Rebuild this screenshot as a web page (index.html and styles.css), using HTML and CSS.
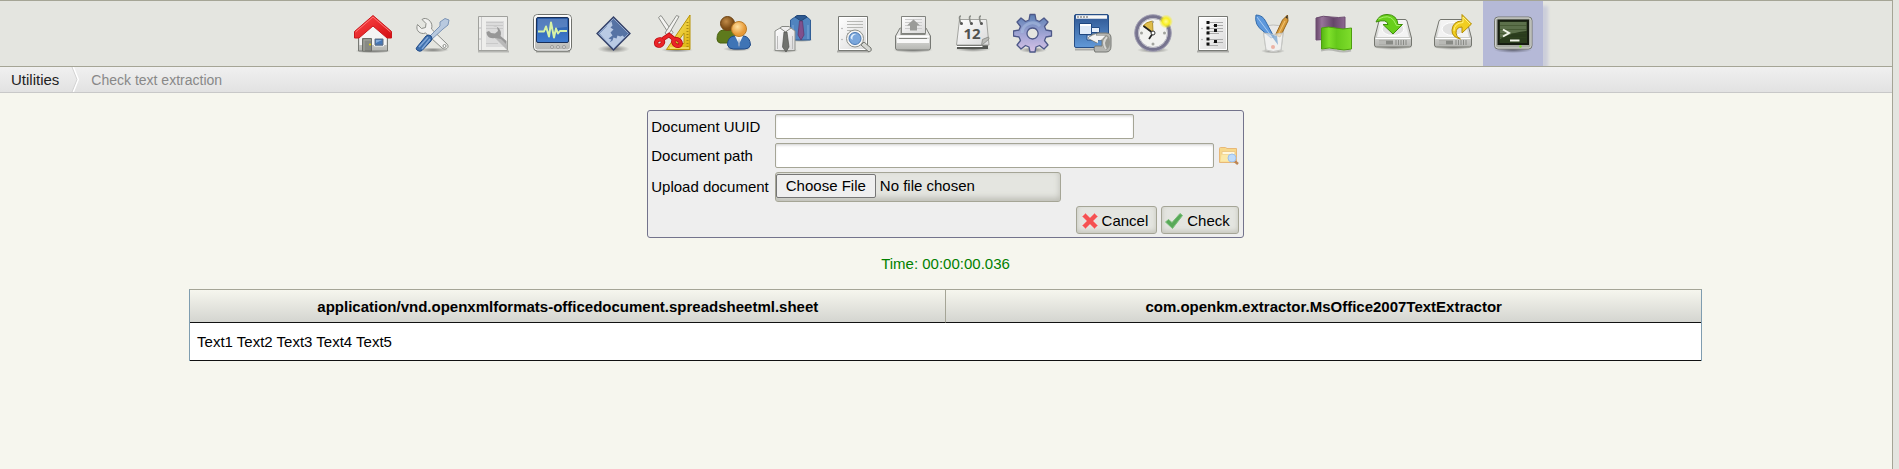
FILE: index.html
```html
<!DOCTYPE html>
<html lang="en">
<head>
<meta charset="utf-8">
<title>Check text extraction</title>
<link rel="stylesheet" href="styles.css">
</head>
<body>
<svg class="defs" aria-hidden="true">
  <defs>
    <linearGradient id="paper" x1="0" y1="0" x2="1" y2="1"><stop offset="0" stop-color="#fff"/><stop offset="1" stop-color="#d9d9d9"/></linearGradient>
    <linearGradient id="metal" x1="0" y1="0" x2="0" y2="1"><stop offset="0" stop-color="#f8f8f7"/><stop offset="1" stop-color="#b5b6b2"/></linearGradient>
    <linearGradient id="blue" x1="0" y1="0" x2="0" y2="1"><stop offset="0" stop-color="#2d5591"/><stop offset="1" stop-color="#6199d8"/></linearGradient>
    <linearGradient id="screen" x1="0" y1="0" x2="0" y2="1"><stop offset="0" stop-color="#2b5ba4"/><stop offset="1" stop-color="#3f7cd0"/></linearGradient>
    <linearGradient id="red" x1="0" y1="0" x2="1" y2="1"><stop offset="0" stop-color="#ff4a4a"/><stop offset="1" stop-color="#d40d12"/></linearGradient>
    <linearGradient id="yellow" x1="0" y1="0" x2="1" y2="1"><stop offset="0" stop-color="#fff27a"/><stop offset="1" stop-color="#dcae08"/></linearGradient>
    <linearGradient id="green" x1="0" y1="0" x2="1" y2="0"><stop offset="0" stop-color="#56b512"/><stop offset=".25" stop-color="#7fe02b"/><stop offset=".5" stop-color="#65c91b"/><stop offset="1" stop-color="#7fdd2c"/></linearGradient>
    <linearGradient id="purple" x1="0" y1="0" x2="1" y2="0"><stop offset="0" stop-color="#69486b"/><stop offset=".2" stop-color="#97749a"/><stop offset=".6" stop-color="#65466a"/><stop offset="1" stop-color="#8d6791"/></linearGradient>
    <linearGradient id="gear" x1="0" y1="0" x2="0" y2="1"><stop offset="0" stop-color="#5b7fb4"/><stop offset=".6" stop-color="#a9a9d8"/><stop offset="1" stop-color="#d7c3e6"/></linearGradient>
    <radialGradient id="shade"><stop offset="0" stop-color="#000" stop-opacity=".45"/><stop offset="1" stop-color="#000" stop-opacity="0"/></radialGradient>
    <radialGradient id="glow"><stop offset="0" stop-color="#fffb90"/><stop offset=".5" stop-color="#f8ee20"/><stop offset="1" stop-color="#f8ee20" stop-opacity="0"/></radialGradient>
    <radialGradient id="skin" cx=".4" cy=".35"><stop offset="0" stop-color="#ffe0a0"/><stop offset="1" stop-color="#e79a38"/></radialGradient>
    <radialGradient id="brown" cx=".4" cy=".35"><stop offset="0" stop-color="#c08a48"/><stop offset="1" stop-color="#7e4d16"/></radialGradient>
    <g id="drive">
      <ellipse cx="20" cy="34" rx="20" ry="3" fill="url(#shade)"/>
      <path d="M8 6.500h24q1.500 0 2 1.500l4.500 17v7q0 2-2 2h-33q-2 0-2-2v-7l4.500-17q.5-1.500 2-1.500z" fill="url(#metal)" stroke="#74766f"/>
      <path d="M8.500 8h23l4.500 16h-32z" fill="#f3f3f3"/>
      <ellipse cx="20" cy="16" rx="11" ry="6.500" fill="#e2e2e2" stroke="#fff"/>
      <path d="M2.500 25.500h35" stroke="#fff"/>
      <path d="M6 29.500h14" stroke="#888a85" stroke-width="4"/><path d="M6 29.500h7" stroke="#b8b9b5" stroke-width="4"/>
      <path d="M23 27v5M25.500 27v5M28 27v5M30.500 27v5M33 27v5" stroke="#888a85"/>
    </g>
    <g id="sheet">
      <path d="M4 38.500h32" stroke="#000" stroke-opacity=".25" stroke-width="2"/>
      <path d="M5.500 3.500h29v34h-29z" fill="url(#paper)" stroke="#777974" stroke-linejoin="round"/>
      <path d="M6.500 4.500h27v32h-27z" fill="none" stroke="#fff"/>
    </g>
  </defs>
</svg>
<div class="page">
  <nav class="toolbar" aria-label="Administration">
    <a class="tool" href="#home" aria-label="Home"><svg viewBox="0 0 40 40">
      <ellipse cx="20" cy="38" rx="18" ry="2.500" fill="url(#shade)"/>
      <path d="M5.500 20L20 8l14.500 12v18h-29z" fill="url(#metal)" stroke="#777974"/><path d="M6.500 20L20 9l13.500 11v12h-27z" fill="#f4f4f4"/>
      <path d="M9.500 25.500h9V38h-9z" fill="#888a85" stroke="#6d6f69"/><path d="M11 38V27h7" fill="none" stroke="#a5a79f"/><circle cx="17" cy="31.500" r="1" fill="#edd400"/>
      <path d="M21.500 25.500h9v7.500h-9z" fill="#3467a5" stroke="#f8f8f8"/><path d="M22 26h8v6h-8z" fill="#4576b5" stroke="#5e6d80"/><path d="M23 27h6l-6 3z" fill="#88addb"/>
      <path d="M20 2.500L38.500 18.500v6.500L34 25 20 13 6 25H1.500v-6.500z" fill="url(#red)" stroke="#c9171b" stroke-linejoin="round"/><path d="M2.500 19L20 4 37.500 19" fill="none" stroke="#ff7777"/>
    </svg></a>
    <a class="tool" href="#tools" aria-label="Tools"><svg viewBox="0 0 40 40">
      <ellipse cx="20" cy="37" rx="16" ry="2.500" fill="url(#shade)"/>
      <path d="M11 5.500l-2 1 4 4-.5 4-4 1-4-4c-2 5 1 9 6 9l2-.5L29 35c4 3 8-1 5-4L18.500 16c2-6-3-11-7.500-10.500z" fill="#f1f1ef" stroke="#8b8d88"/>
      <circle cx="31.500" cy="33" r="1.500" fill="#fff" stroke="#8b8d88"/>
      <path d="M27 9l5-3.500 4 1.500-1 5-5 4-12 11-2.500-2.500L27 13z" fill="#b8c9df" stroke="#7a93b5"/>
      <path d="M4 34l9-11q3-2 5 0t0 5L9 37.500q-2 1.500-4.500 0T4 34z" fill="#3e70ae" stroke="#204a87"/><path d="M6 34l9-10M9 36l8-10" stroke="#83a8d8" stroke-width="1.500"/>
    </svg></a>
    <a class="tool" href="#scripts" aria-label="Scripts"><svg viewBox="0 0 40 40">
      <path d="M5 38.500h31" stroke="#000" stroke-opacity=".2" stroke-width="2"/><path d="M5.500 3.500h29v34h-29z" fill="#eeeeec" stroke="#a0a19d"/><path d="M8.500 4v33" stroke="#ccc"/>
      <path d="M13 8h18v26H13z" fill="#dcdcdc"/><path d="M13 9.500h17M13 12.500h17M13 15.500h17M13 30.500h12" stroke="#c9c9c9"/>
      <path d="M20 13l4 1 1 4-3 2.500-4-.5-2-2-2.500 1c0 4 3 7 8 6l3 1 9 8v-6l-6-5c2-5-2-10-7.500-10z" fill="#979797"/><path d="M22 25l6 1 6 6v5z" fill="#b9b9b9"/>
      <circle cx="7" cy="15" r=".7" fill="#aaa"/><circle cx="7" cy="26" r=".7" fill="#aaa"/>
    </svg></a>
    <a class="tool" href="#statistics" aria-label="Statistics"><svg viewBox="0 0 40 40">
      <path d="M3 38.500h34" stroke="#000" stroke-opacity=".3" stroke-width="2"/>
      <rect x=".5" y="1.500" width="38" height="36.500" rx="4" fill="url(#metal)" stroke="#70726d"/><rect x="1.500" y="2.500" width="36" height="34.500" rx="3" fill="none" stroke="#fff"/>
      <rect x="3.500" y="4.500" width="32" height="25" rx="1.500" fill="url(#screen)" stroke="#182f59"/><path d="M5 6h29v8Q18 15 5 19z" fill="#6f93c9" opacity=".6"/>
      <path d="M5 18.500h6l2-5 3 10 2-14 3 15 2-9 2 5 2-2.500h7" fill="none" stroke="#d6f2a6" stroke-width="2" stroke-linejoin="round"/>
      <circle cx="19" cy="34" r="1.500" fill="#ddd" stroke="#999"/><circle cx="25" cy="34" r="1.500" fill="#ddd" stroke="#999"/><circle cx="31" cy="34" r="1.500" fill="#ddd" stroke="#999"/>
    </svg></a>
    <a class="tool" href="#mime" aria-label="Mime types"><svg viewBox="0 0 40 40">
      <ellipse cx="20.500" cy="36" rx="16" ry="4" fill="url(#shade)"/><path d="M20.500 4L37 20.500 20.500 37 4 20.500z" fill="#5673a4"/>
      <path d="M6.500 20.500l7-7 1-2 4-3 1 4-2 2 3 2-3 3 2 3-4 3 3 1-2 3 3-2 1-3 3 1 1-3 3 1 2-1 2 2-11 11.500z" fill="#b9cae4"/><path d="M20.500 5.500L35.500 20.500 20.500 35.500 5.500 20.500z" fill="none" stroke="#9bb2d6"/><path d="M20.500 4L37 20.500 20.500 37 4 20.500z" fill="none" stroke="#354269" stroke-width="1.300"/>
    </svg></a>
    <a class="tool" href="#stamps" aria-label="Stamps"><svg viewBox="0 0 40 40">
      <ellipse cx="24" cy="37" rx="16" ry="2.500" fill="url(#shade)"/>
      <path d="M37 2v34.500H13.500zM31 20v10.500h-7.500z" fill="url(#yellow)" fill-rule="evenodd" stroke="#b89305"/><path d="M34.500 9v25" stroke="#a98a10" stroke-width="2" stroke-dasharray="1 2"/><path d="M17 35h19" stroke="#fff39a"/>
      <path d="M5.500 4.500L8 2.500l12 17-3 3z" fill="#f3f3f1" stroke="#8d8f8a"/><path d="M26 3.500l-2.500-1L12 20l3 2.500z" fill="#f3f3f1" stroke="#8d8f8a"/>
      <g fill="none" stroke="#b50b10" stroke-width="4.400"><ellipse cx="6.500" cy="29.500" rx="3.600" ry="3" transform="rotate(-30 6.500 29.500)"/><ellipse cx="24" cy="29.500" rx="4" ry="3" transform="rotate(35 24 29.500)"/><path d="M10 26l6-4 5 4"/></g>
      <g fill="none" stroke="#eb2428" stroke-width="3"><ellipse cx="6.500" cy="29.500" rx="3.600" ry="3" transform="rotate(-30 6.500 29.500)"/><ellipse cx="24" cy="29.500" rx="4" ry="3" transform="rotate(35 24 29.500)"/><path d="M10 26l6-4 5 4"/></g>
    </svg></a>
    <a class="tool" href="#users" aria-label="Users"><svg viewBox="0 0 40 40">
      <ellipse cx="24" cy="36" rx="14" ry="2.500" fill="url(#shade)"/>
      <path d="M4 26q0-8 6-9h9q4 2 4 6v7H7q-3-1-3-4z" fill="#5e7a1c" stroke="#46600c"/><circle cx="14.500" cy="10.500" r="7" fill="url(#brown)" stroke="#6e4313"/>
      <path d="M14.500 32q0-8 6.500-9h10q6 1 6.500 9-1 4-6 4h-11q-5 0-6-4z" fill="#3f74b5" stroke="#204a87"/><path d="M22 23h8l-4 8z" fill="#f4f4f4"/><path d="M26 25l1 7-1 2-1-2z" fill="#8ea4c4"/><circle cx="26" cy="16" r="7.500" fill="url(#skin)" stroke="#bb7b27"/>
    </svg></a>
    <a class="tool" href="#profiles" aria-label="Profiles"><svg viewBox="0 0 40 40">
      <ellipse cx="12" cy="37.500" rx="13" ry="2.500" fill="url(#shade)"/><ellipse cx="28" cy="27" rx="12" ry="2" fill="url(#shade)"/>
      <path d="M22 4q6-3 12 0l3.500 3v20h-20V7z" fill="#5084bf" stroke="#315e96"/><path d="M22 4l6 4 6-4-2-1.500h-8z" fill="#2d5991" stroke="#224879"/><path d="M20 12v14M35 12v14" stroke="#7ba8da"/><path d="M26.500 8h3l1.500 14-3 5-3-5z" fill="#80508c" stroke="#5d3569" stroke-width=".7"/>
      <path d="M7 15q6-3 11 0l4 3v19.500H2V18z" fill="url(#paper)" stroke="#8e908b"/><path d="M7 15l5.500 4 5.500-4-2-1.500H9z" fill="#eee" stroke="#878984"/><path d="M4.500 23v13M19.500 23v13" stroke="#bbb"/><path d="M11 19h3l2 15-3 5-3.500-5z" fill="#70726e" stroke="#50524d" stroke-width=".7"/>
    </svg></a>
    <a class="tool" href="#logs" aria-label="Logs"><svg viewBox="0 0 40 40">
      <use href="#sheet"/><path d="M14 8.500h16M14 11.500h16M14 14.500h16M14 17.500h7M14 20.500h4" stroke="#b7b8b5"/><circle cx="9" cy="15.500" r=".8" fill="#aaa"/><circle cx="9" cy="26.500" r=".8" fill="#aaa"/>
      <path d="M28 32l3-3 7 6q1.500 3-2 4z" fill="#d5d6d2" stroke="#757771"/><circle cx="22" cy="25.500" r="8.500" fill="#f4f4f4" stroke="#8d8f89"/><circle cx="22" cy="25.500" r="6" fill="#7ba7dc" stroke="#4b7ab4"/><path d="M17.500 25q1-5 6-4-5 1-4 6z" fill="#e2effc"/>
    </svg></a>
    <a class="tool" href="#reports" aria-label="Reports"><svg viewBox="0 0 40 40">
      <ellipse cx="20" cy="37" rx="20" ry="3" fill="url(#shade)"/>
      <path d="M6 17q0-2 2-2h24q2 0 2 2l3.500 6v12q0 2-2 2h-31q-2 0-2-2V23z" fill="url(#metal)" stroke="#777974"/><path d="M7.500 22h25v-6h-25z" fill="#888a85"/>
      <path d="M8.500 3.500h24v17h-24z" fill="url(#paper)" stroke="#81837e"/><path d="M12 6.500h17M12 9.500h17M12 12.500h17M12 15.500h17" stroke="#ccc"/><path d="M20.500 6.500l6.500 6h-3v5h-7v-5h-3z" fill="#9a9b98"/>
      <path d="M4 23.500h32" stroke="#fff" stroke-width="2"/><path d="M6 25.500h28" stroke="#81837e"/><path d="M4 28h32" stroke="#f8f8f8" stroke-width="4"/>
    </svg></a>
    <a class="tool" href="#cron" aria-label="Crontab"><svg viewBox="0 0 40 40">
      <ellipse cx="20" cy="36" rx="18" ry="3" fill="url(#shade)"/><path d="M4 32h31v4H4z" fill="#555753"/><path d="M6.500 6.500h27L36 32H3.500z" fill="url(#paper)" stroke="#a3a4a0"/><path d="M3.500 33.500h26" stroke="#fff"/>
      <path d="M28.500 32.500l1-6 6-2.500.5 2z" fill="#babbb7" stroke="#92938f"/>
      <g fill="none" stroke="#8a8c87" stroke-width="1.600"><path d="M8 11q-3-8 0-8M18 11q-3-8 0-8M28 11q-3-8 0-8"/></g><g fill="#555"><circle cx="8.500" cy="10.500" r="1.500"/><circle cx="18.500" cy="10.500" r="1.500"/><circle cx="28.500" cy="10.500" r="1.500"/></g>
      <text x="19" y="26" class="calendar-day">12</text>
    </svg></a>
    <a class="tool" href="#config" aria-label="Configuration"><svg viewBox="0 0 40 40">
      <ellipse cx="20" cy="37" rx="14" ry="3" fill="url(#shade)"/>
      <path fill-rule="evenodd" d="M17 1.500h5l1 5.500 3.500 1.500L31 5l4 4-3.500 4.500L33 17l5.500 1v5L33 24l-1.500 3.500L35 32l-4 4-4.500-3.500L23 34l-1 5h-5l-1-5-3.500-1.500L8 36l-4-4 3.500-4.500L6 24l-5.500-1v-5L6 17l1.500-3.500L4 9l4-4 4.500 3.500L16 7zM19.500 15a5.500 5.500 0 1 0 .1 0z" fill="url(#gear)" stroke="#4d5888" stroke-width="1.300" stroke-linejoin="round"/>
      <path d="M9 20a10.500 10.500 0 0 1 18-7" fill="none" stroke="#a9bddf" stroke-width="3" opacity=".6"/>
    </svg></a>
    <a class="tool" href="#automation" aria-label="Automation"><svg viewBox="0 0 40 40">
      <path d="M2 36.500h34" stroke="#000" stroke-opacity=".25" stroke-width="2"/><rect x="1.500" y="1.500" width="34" height="33" rx="1.500" fill="url(#blue)" stroke="#274f87"/><path d="M3 4h31" stroke="#f7f7f7" stroke-width="3.500"/><path d="M4 4h11" stroke="#aaa" stroke-width="2" stroke-dasharray="2 1"/>
      <path d="M6.500 10.500h12v11h-12z" fill="#dfeaf8" stroke="#1e467f"/><path d="M7 12h11" stroke="#fff" stroke-width="2"/><path d="M18.500 14.500h8v5h-8zM14 22h12v5H14z" fill="#e9f1fb" stroke="#244d87"/>
      <path d="M15 25l5-4h4v-1h9q5 0 5 5v8q0 6-5 6H22q-2-3 0-6h7v-6h-5v3z" fill="#b4b5b1" stroke="#777974"/><path d="M33 22q4 1 4 7t-4 8q-4-3-4-8t4-7z" fill="#94958f"/><path d="M34 24q-3 3-3 6t2 6" fill="none" stroke="#d8d8d5" stroke-width="2"/><path d="M15 25l8-4v2h9l-4 4h-3v3z" fill="#f3f3f2"/>
    </svg></a>
    <a class="tool" href="#tasks" aria-label="Scheduled tasks"><svg viewBox="0 0 40 40">
      <ellipse cx="20" cy="37" rx="16" ry="3" fill="url(#shade)"/><circle cx="20" cy="20" r="16.500" fill="#f2f2f0" stroke="#77748f" stroke-width="3.600"/><circle cx="20" cy="20" r="18.300" fill="none" stroke="#a4a2b5"/><circle cx="20" cy="20" r="14.500" fill="none" stroke="#b7b6c2"/>
      <path d="M20 20L10 13q3-4 9.500-5z" fill="#e0bd4b" stroke="#b39229"/><path d="M20 20L10.500 13M20 20l-4 6" stroke="#222" stroke-width="1.700"/><circle cx="20" cy="20" r="2" fill="#fff" stroke="#333"/><g fill="#a2a39e"><circle cx="8.500" cy="20" r="1.500"/><circle cx="31.500" cy="20" r="1.500"/><circle cx="20" cy="31" r="1.500"/><circle cx="20" cy="9" r="1"/></g>
      <circle cx="33" cy="8.500" r="7" fill="url(#glow)"/>
    </svg></a>
    <a class="tool" href="#activity" aria-label="Activity log"><svg viewBox="0 0 40 40">
      <use href="#sheet"/><path d="M14 9.500h16M20 12.500h10M14 15.500h16M14 18.500h16M14 20.500h12M14 26.500h16M20 29.500h10M14 32.500h11" stroke="#aaa"/>
      <g fill="#111"><path d="M13.500 8h3v3h-3zM21 11h3v3h-3zM13.500 13.500h3v3h-3zM21 16h3v3h-3zM13.500 18.500h3v3h-3zM13.500 24.500h3v3h-3zM21 27h3v3h-3zM13.500 29.500h3v3h-3z"/></g><circle cx="9" cy="15.500" r=".8" fill="#aaa"/><circle cx="9" cy="26.500" r=".8" fill="#aaa"/>
    </svg></a>
    <a class="tool" href="#appearance" aria-label="Appearance"><svg viewBox="0 0 40 40">
      <ellipse cx="20" cy="38" rx="12" ry="2.500" fill="url(#shade)"/><path d="M10 14q10-4 21 0l-3 23q-8 3-15 0z" fill="#e8e8e7" stroke="#bdbeba"/>
      <path d="M3 2q7 0 10 7l8 15-3 1-8-7Q1 12 3 2z" fill="#5d98dc" stroke="#346cab"/><path d="M4 4l15 20" stroke="#a8cbf2"/>
      <path d="M34.500 2l.5 6-8 16-4.500-2 7-15z" fill="#d79a3b" stroke="#95651a"/><path d="M34.500 2v4l-2-1.500z" fill="#333"/><path d="M32 8l-7 14" stroke="#f0c777"/>
      <path d="M10.500 20q10 3 19.500 0l-2 17q-8 3-15 0z" fill="#f3f3f2" fill-opacity=".72" stroke="#c6c7c4"/><path d="M17 21l8 11-1-9z" fill="#6c9dcd" opacity=".7"/><circle cx="20" cy="34" r="2" fill="#e8735a" opacity=".5"/>
    </svg></a>
    <a class="tool" href="#language" aria-label="Language"><svg viewBox="0 0 40 40">
      <path d="M3 5q7-3 15-1 8 1 14 0v22q-8 2-15 1-7-1-14 0z" fill="url(#purple)" stroke="#6c4c70"/><path d="M8 37.500q8-2 15 0t15 0" fill="none" stroke="#000" stroke-opacity=".2" stroke-width="2"/><path d="M8.500 15q7-2 14 0t16 0v21q-8 2-15 0t-15 0z" fill="url(#green)" stroke="#4d9e0f"/>
    </svg></a>
    <a class="tool" href="#import" aria-label="Import"><svg viewBox="0 0 40 40">
      <use href="#drive"/><path d="M3 9Q6 1.500 14 1.500q10 0 11 10h4.500L20 21 10 11.500h5q-1-6-12-2.500z" fill="#67cf1b" stroke="#3f8d0b" stroke-linejoin="round"/><path d="M5.500 6q10-5 15 1l3 5.500h3.500" fill="none" stroke="#a6f06a"/>
    </svg></a>
    <a class="tool" href="#export" aria-label="Export"><svg viewBox="0 0 40 40">
      <use href="#drive"/><path d="M27.500 26q-9-2-8.500-9 1-9 10-9V1.500L38.500 11 29 20v-6q-6 0-6 6 0 4 4.500 6z" fill="#f1ce20" stroke="#b48d04" stroke-linejoin="round"/><path d="M21 18q0-8 9-8.500V4l7 7" fill="none" stroke="#fff17d"/>
    </svg></a>
    <a class="tool active" href="#utilities" aria-label="Utilities" aria-current="page"><svg viewBox="0 0 40 40">
      <ellipse cx="20" cy="37" rx="19" ry="3" fill="url(#shade)"/><rect x="1.500" y="4" width="37.500" height="32" rx="3.500" fill="#a7aaa3" stroke="#747770"/><rect x="2.500" y="5" width="35.500" height="30" rx="2.500" fill="none" stroke="#d0d2ce"/>
      <path d="M5.500 7.500h29.500v23.500H5.500z" fill="#2a3c1d" stroke="#171d12" stroke-width="2"/><path d="M7 9h26.500v9Q20 19 7 26z" fill="#5c704b"/><path d="M7 12.500h26.500M7 16.500h26.500M7 20.500h26.500M7 24.500h26.500" stroke="#31461f" stroke-opacity=".5"/>
      <path d="M10 16.500l6 3.500-6 3.500" fill="none" stroke="#f1f5e9" stroke-width="2"/><path d="M17 27.500h9.500" stroke="#f1f5e9" stroke-width="2"/><circle cx="27.500" cy="33.500" r="1.200" fill="#7cdd29"/>
    </svg></a>
  </nav>

  <nav class="breadcrumb" aria-label="Breadcrumb">
    <a class="crumb" href="#utilities">Utilities</a>
    <svg class="crumb-arrow" viewBox="0 0 10 25" aria-hidden="true"><path d="M2 0l5 12.500L2 25" fill="none" stroke="#fff" stroke-width="2"/><path d="M1 0l5 12.500L1 25" fill="none" stroke="#d2d2d2"/></svg>
    <span class="crumb-current" aria-current="page">Check text extraction</span>
  </nav>

  <main class="content">
    <form class="form">
      <label for="uuid">Document UUID</label>
      <div class="field"><input class="text uuid" id="uuid" type="text"></div>
      <label for="path">Document path</label>
      <div class="field"><input class="text path" id="path" type="text">
        <a class="browse" href="#browse" aria-label="Browse documents"><svg viewBox="0 0 20 18"><path d="M.5 15.500V1.500q0-1 1-1h5l1.500 1h9.500v14z" fill="#f7d88a" stroke="#e8b878"/><path d="M3 4.500h13v3H3z" fill="#fff8df" stroke="#edca88"/><path d="M1.500 14.500l1-7h14v7z" fill="#fbe9a9"/><path d="M15.500 14l3.500 3" stroke="#bd8554" stroke-width="2.500"/><circle cx="13" cy="11" r="4" fill="#bfdcfb" stroke="#9dc0ec"/></svg></a>
      </div>
      <label for="file">Upload document</label>
      <div class="field"><input class="file" id="file" type="file"></div>
      <div class="actions">
        <button class="button" type="reset"><svg viewBox="0 0 16 16" aria-hidden="true"><path d="M3.500.5L8 5l4.500-4.500 3 3L11 8l4.500 4.500-3 3L8 11l-4.500 4.500-3-3L5 8 .5 3.500z" fill="#f45252" stroke="#fa8a8a"/></svg>Cancel</button>
        <button class="button check" type="button"><svg viewBox="0 0 18 16" aria-hidden="true"><path d="M.5 9L3.500 6.500 7 9.500 15 .5l2.500 2L7.500 15.500z" fill="#58a958" stroke="#7cbf7a"/></svg>Check</button>
      </div>
    </form>

    <p class="time">Time: 00:00:00.036</p>

    <table class="results">
      <thead><tr><th scope="col">application/vnd.openxmlformats-officedocument.spreadsheetml.sheet</th><th scope="col">com.openkm.extractor.MsOffice2007TextExtractor</th></tr></thead>
      <tbody><tr><td colspan="2">Text1 Text2 Text3 Text4 Text5</td></tr></tbody>
    </table>
  </main>
</div>
</body>
</html>
```
FILE: styles.css
```css
* {
  box-sizing: border-box;
}

body {
  margin: 0;
  padding-right: 6px;
  background: #e4e5e0;
  color: #000;
  font: 15px/20px "Liberation Sans", Arial, sans-serif;
}

.defs {
  position: absolute;
  width: 0;
  height: 0;
}

.page {
  min-height: 100vh;
  border-top: 1px solid #a5a596;
  border-right: 1px solid #a5a596;
  background: #f6f6ee;
}

.toolbar {
  display: flex;
  justify-content: center;
  padding-right: 6px;
  overflow: hidden;
  border-bottom: 1px solid #a5a596;
  background: #e4e5e0;
}

.tool {
  padding: 12px 10px 13px;
}

.tool svg {
  display: block;
  width: 40px;
  height: 40px;
}

.tool.active {
  background: #b5b9d7;
  box-shadow: 5px 5px 3px #ccceda;
}

.calendar-day {
  font: bold 15px "Open Sans", "Liberation Sans", sans-serif;
  fill: #50524e;
  text-anchor: middle;
}

.breadcrumb {
  display: flex;
  align-items: center;
  height: 26px;
  padding-left: 11px;
  border-bottom: 1px solid #c8c8c8;
  background: linear-gradient(#f0f0f0, #e2e2e2);
}

.crumb {
  color: #222;
  text-decoration: none;
}

.crumb-arrow {
  width: 10px;
  height: 25px;
  margin: 0 10px 0 12px;
}

.crumb-current {
  color: #888;
  font-size: 14px;
}

.content {
  display: flex;
  flex-direction: column;
  align-items: center;
  padding: 17px 1px 0 0;
}

.form {
  display: grid;
  grid-template-columns: auto 464px;
  gap: 4px 6px;
  align-items: center;
  padding: 3px 4px 3px 3px;
  border: 1px solid #73738c;
  border-radius: 3px;
  background: #eee;
}

.field {
  display: flex;
  align-items: center;
  justify-content: space-between;
}

.text {
  height: 25px;
  padding: 2px 4px;
  border: 1px solid #a5a596;
  border-radius: 2px;
  background: #fff;
  box-shadow: inset 0 2px 3px -1px #ccc;
  font: inherit;
}

.uuid {
  width: 359px;
}

.path {
  width: 439px;
}

.browse svg {
  display: block;
  width: 20px;
  height: 18px;
}

.file {
  width: 286px;
  height: 30px;
  padding: 1px 0;
  border: 1px solid #a5a596;
  border-radius: 3px;
  background: #e4e5e0;
  box-shadow: inset 0 -3px 6px #bcbcb4;
  font: inherit;
}

.file::file-selector-button {
  height: 24px;
  margin: 0 4px 0 0;
  padding: 0 9px;
  border: 1px solid #767676;
  border-radius: 2px;
  background: #efefef;
  color: #000;
  font: inherit;
}

.actions {
  display: flex;
  grid-column: 1 / -1;
  justify-content: flex-end;
  gap: 4px;
}

.button {
  display: flex;
  align-items: center;
  gap: 4px;
  height: 28px;
  padding: 1px 8px 0 5px;
  border: 1px solid #a5a596;
  border-radius: 3px;
  background: #e4e5e0;
  box-shadow: inset 0 -2px 5px #c4c4bb;
  color: #000;
  font: inherit;
}

.button svg {
  width: 16px;
  height: 16px;
}

.button.check {
  padding-left: 3px;
}

.check svg {
  width: 18px;
}

.time {
  margin: 16px 0 15px;
  color: #008000;
}

.results {
  width: 80%;
  border: 1px solid #7f9db0;
  border-top-color: #a5a596;
  border-bottom: 0;
  border-spacing: 0;
  background: #fff;
}

.results th {
  width: 50%;
  height: 33px;
  padding: 2px 6px 0;
  border-bottom: 1px solid #111;
  background: linear-gradient(#f6f6ee, #d4d5d0);
}

.results th + th {
  border-left: 1px solid #a5a596;
}

.results td {
  height: 38px;
  padding: 0 7px;
  border-bottom: 1px solid #111;
}
```
